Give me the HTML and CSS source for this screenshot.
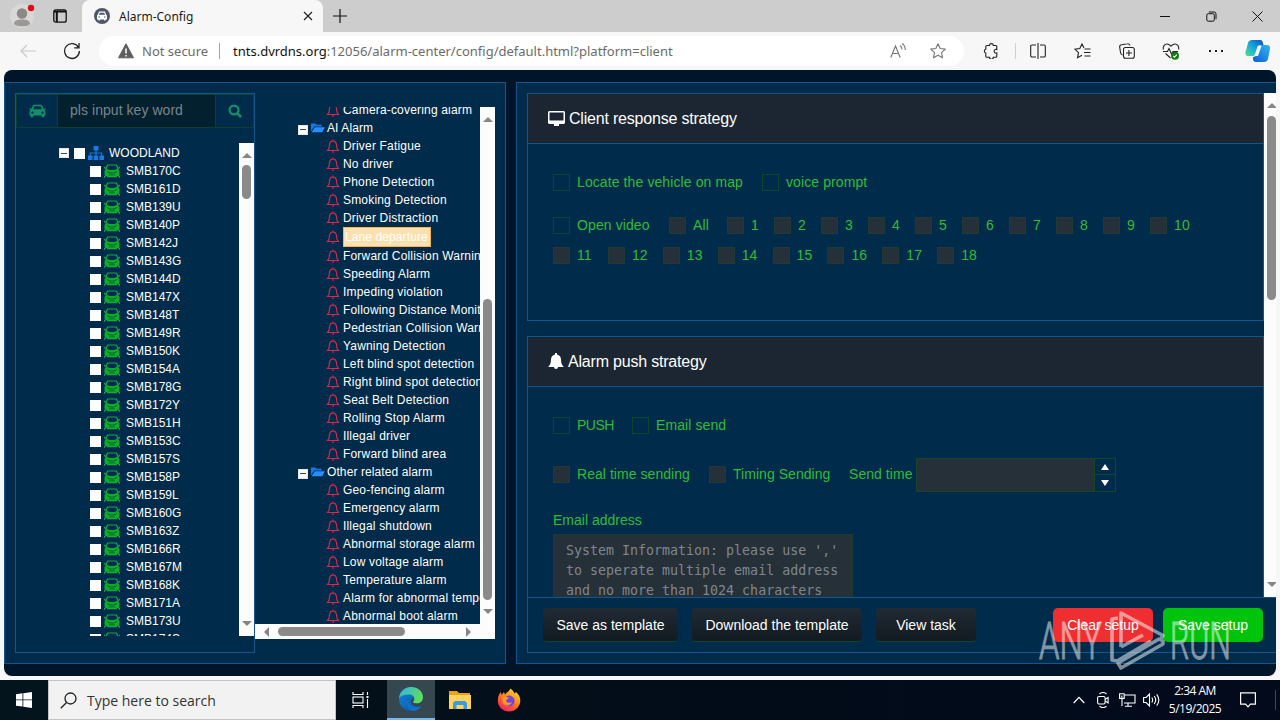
FILE: index.html
```html
<!DOCTYPE html>
<html lang="en">
<head>
    <meta charset="UTF-8">
    <meta name="viewport" content="width=device-width, initial-scale=1.0">
    <title>Alarm-Config</title>
    <link rel="stylesheet" href="styles.css">
</head>
<body>
    <svg class="sprite" width="0" height="0">
        <symbol id="car" viewBox="0 0 16 14">
            <path fill-rule="evenodd" d="M3.6 0.8h8.8l1.6 4 2-.6v1.4l-1.2.5c.8.7 1.2 1.4 1.2 2.5v2.8h-1.2v1.8h-2.6v-1.8H3.8v1.8H1.2v-1.8H0V8.600c0-1.100.4-1.800 1.200-2.500L0 5.600V4.200l2 .6zM4.700 2.300l-1 2.900h8.600l-1-2.900zM2.900 7.400a1.200 1.200 0 1 0 .1 0zM13 7.400a1.200 1.200 0 1 0 .1 0z"/>
        </symbol>
        <symbol id="car-row" viewBox="0 0 16 14">
            <path d="M3.500 1h9M2 5l1.500-4M14 5l-1.500-4M0 3l2 2M16 3l-2 2" fill="none" stroke="#12a84a" stroke-width="1.200"/>
            <path d="M2.500 4.500l3 1.500h5l3-1.500 2 2.500v3.500l-2 1.500h-11L.5 10.500V7z" fill="#09ad26"/>
            <path d="M3 7.500l3 1.500h4l3-1.500M5 11h6" fill="none" stroke="#045c2f"/>
            <path d="M0 13.500l2.500-3M16 13.500l-2.500-3M3 12.500h10" fill="none" stroke="#0fae3a" stroke-width="1.300"/>
        </symbol>
        <symbol id="bell-o" viewBox="0 0 14 14">
            <path d="M1.500 11.500h11L11 9.300 10.400 5C10 3 9 2 7 2S4 3 3.600 5L3 9.300zM7 .5v1.400M5.800 13h2.400" fill="none" stroke="#e0284f" stroke-width="1.100"/>
        </symbol>
        <symbol id="folder" viewBox="0 0 14 10">
            <path d="M0 8.500V.5h4.500l1 1.200h5.200v1.800H3.300z" fill="#1678e8"/>
            <path d="M3.800 4.200H14l-2.800 5H.6z" fill="#2b8cff"/>
        </symbol>
        <symbol id="search" viewBox="0 0 14 14">
            <circle cx="6" cy="6" r="4.400" fill="none" stroke="currentColor" stroke-width="2.200"/>
            <path d="M9.300 9.300l3.700 3.700" stroke="currentColor" stroke-width="2.600"/>
        </symbol>
    </svg>

    <div class="tabbar">
        <svg class="avatar" width="28" height="24" viewBox="0 0 28 24">
            <circle cx="12" cy="12" r="12" fill="#d9d8d7"/>
            <circle cx="12" cy="9.500" r="5.200" fill="#8b8886"/>
            <path d="M4 20c0-3.500 3.500-4.500 8-4.500s8 1 8 4.500c-2 2-5 2.300-8 2.300S6 22 4 20z" fill="#9b9896"/>
            <circle cx="21" cy="4" r="3.200" fill="#e00b1c"/>
        </svg>
        <svg class="tabs-icon" width="14" height="14" viewBox="0 0 14 14">
            <rect x=".8" y=".8" width="12.400" height="12.400" rx="2" fill="none" stroke="#111" stroke-width="1.300"/>
            <path d="M1 2.500h12M3.800 3v10" stroke="#111" stroke-width="2"/>
        </svg>
        <div class="tab">
            <svg width="16" height="16" viewBox="0 0 16 16">
                <circle cx="8" cy="8" r="8" fill="#4d5769"/>
                <path fill="#fff" fill-rule="evenodd" d="M5 3.500h6l1.200 3.200.8.800v4h-1.500v1h-1.500v-1H6v1H4.500v-1H3v-4l.8-.8zM5.700 4.700L5 6.800h6l-.7-2.100zM4.500 8.500v1h1.500v-1zM10 8.500v1h1.500v-1z"/>
            </svg>
            <span>Alarm-Config</span>
            <svg width="10" height="10" viewBox="0 0 10 10"><path d="M1 1l8 8M9 1l-8 8" stroke="#222" stroke-width="1.200"/></svg>
        </div>
        <svg class="new-tab" width="14" height="14" viewBox="0 0 14 14"><path d="M7 0v14M0 7h14" stroke="#111" stroke-width="1.200"/></svg>
        <div class="win-buttons">
            <span><svg width="10" height="10"><path d="M0 5.500h10" stroke="#111"/></svg></span>
            <span><svg width="11" height="11" viewBox="0 0 11 11" fill="none" stroke="#111"><rect x=".8" y="2.700" width="7.500" height="7.500" rx="1.500"/><path d="M2.800 1h5.200a2 2 0 0 1 2 2v5.200"/></svg></span>
            <span><svg width="11" height="11"><path d="M.5.500l10 10M10.500.500l-10 10" stroke="#111"/></svg></span>
        </div>
    </div>

    <div class="toolbar">
        <svg class="back" width="16" height="14" viewBox="0 0 16 14" fill="none" stroke="#c9c9c9" stroke-width="1.200"><path d="M16 7H1M7 1L1 7l6 6"/></svg>
        <svg class="reload" width="18" height="18" viewBox="0 0 18 18" fill="none" stroke="#222" stroke-width="1.300"><path d="M15.500 5.500A7.400 7.400 0 1 0 16.400 9M16 1v4.800h-4.800"/></svg>
        <div class="omnibox">
            <svg width="16" height="16" viewBox="0 0 16 16"><path d="M8 .8l7.500 14H.5z" fill="#5e5e5e" stroke="#5e5e5e" stroke-linejoin="round"/><path d="M8 5.500v5M8 12v1.500" stroke="#fff" stroke-width="1.500"/></svg>
            <span class="not-secure">Not secure</span>
            <span class="url"><b>tnts.dvrdns.org</b>:12056/alarm-center/config/default.html?platform=client</span>
            <svg class="read" width="17" height="16" viewBox="0 0 17 16" fill="none" stroke="#777" stroke-width="1.100"><path d="M.8 14.500L5.500 3l4.700 11.500M2.500 10.500h6M10 2.500c1.500 1 2 2 2 4M12 .5c2.300 1.500 3.300 3.500 3.300 6.500"/></svg>
            <svg class="star" width="16" height="16" viewBox="0 0 16 16" fill="none" stroke="#777" stroke-width="1.100"><path d="M8 .8l2.200 4.700 5.100.6-3.800 3.500 1 5.100L8 12.200l-4.500 2.500 1-5.100L.7 6.100l5.100-.6z" stroke-linejoin="round"/></svg>
        </div>
        <div class="tools">
            <span class="ext"><svg width="16" height="16" viewBox="0 0 16 16"><path d="M3.800 2.500h2.700a1.900 1.900 0 0 1 3.800 0h2.500a1 1 0 0 1 1 1v3a1.900 1.900 0 1 0 0 3.500v3.300a1 1 0 0 1-1 1h-2.500a1.900 1.900 0 0 1-3.800 0H3.800a1 1 0 0 1-1-1v-3.300a1.900 1.900 0 0 1 0-3.700V3.500a1 1 0 0 1 1-1z"/></svg></span>
            <span><svg width="16" height="16" viewBox="0 0 16 16"><path d="M6 2H2a1.300 1.300 0 0 0-1.300 1.300v9.400A1.300 1.300 0 0 0 2 14h4M10 2h4a1.300 1.300 0 0 1 1.300 1.300v9.400A1.300 1.300 0 0 1 14 14h-4M8 0v16"/></svg></span>
            <span><svg width="17" height="16" viewBox="0 0 17 16"><path d="M10 5L8 1 5.800 5.500.8 6.100l3.700 3.500-1 5.100L8 12.200M10.500 6h6M10 9.500h6.500M10.500 13h6"/></svg></span>
            <span><svg width="16" height="16" viewBox="0 0 16 16"><path d="M3.500 12A3 3 0 0 1 1.500 9.500L.7 4a2 2 0 0 1 1.800-2.300l6-.9a2 2 0 0 1 2.400 1.700"/><rect x="4.500" y="4.500" width="10.800" height="10.800" rx="2"/><path d="M9.900 7v6M7 10h6"/></svg></span>
            <span><svg width="18" height="17" viewBox="0 0 18 17"><path d="M1.300 6.500C.8 3.500 2.500 1 5 1c2 0 3 1.200 4 2.200C10 2.200 11 1 13 1c2.500 0 4.200 2.500 3.700 5.500M1 8.500h4.500l1.500-3 2.500 5.500 1.500-2.500h5M3.500 10.500l5 4.500"/><circle cx="13" cy="12.800" r="4" fill="#107c10" stroke="none"/><path d="M11.300 13l1.300 1.200 2.200-2.500" stroke="#fff"/></svg></span>
            <span><svg width="16" height="4" viewBox="0 0 16 4"><path d="M1 1h2v2H1zM7 1h2v2H7zM13 1h2v2h-2z" fill="#222" stroke="none"/></svg></span>
            <span class="copilot"><svg width="26" height="24" viewBox="0 0 26 24">
                <defs>
                    <linearGradient id="cp1" x1="0" y1="1" x2="1" y2="0"><stop offset="0" stop-color="#4fe08e"/><stop offset=".5" stop-color="#18a7dd"/><stop offset="1" stop-color="#0a4fc0"/></linearGradient>
                    <linearGradient id="cp2" x1="0" y1="1" x2="1" y2="0"><stop offset="0" stop-color="#0a5fd8"/><stop offset="1" stop-color="#35b5ee"/></linearGradient>
                </defs>
                <path d="M7 1h8c2 0 2.500 1 3 3l.5 2h-3c-2 0-3 1-3.500 3l-2 6c-.5 1.500-1.500 2-3 2H3c-2.500 0-3-2-2.500-4L3 4c.6-2 2-3 4-3z" fill="url(#cp1)" stroke="none"/>
                <path d="M19 23h-8c-2 0-3-1-3-3v-2c2 0 3-1 3.500-3l2-6C14 7.500 15 6 17 6h5c2.500 0 3.500 2 3 4l-2 10c-.5 2-2 3-4 3z" fill="url(#cp2)" stroke="none"/>
                <path d="M13.500 7h3l-3.500 10h-3z" fill="#f4fbff" stroke="none"/>
            </svg></span>
        </div>
    </div>

    <div class="viewport">
        <div class="panel left">
            <div class="vehicles">
                <div class="search-row">
                    <span class="cell"><svg width="17" height="14"><use href="#car"/></svg></span>
                    <span class="field">pls input key word</span>
                    <span class="cell end"><svg width="14" height="14"><use href="#search"/></svg></span>
                </div>
                <div class="scroll-area">
                    <ul class="tree" id="vehicleTree">
                        <li class="root">
                            <i class="toggle"></i><i class="box"></i>
                            <svg width="16" height="14" viewBox="0 0 16 14"><path d="M5.500 0h5v4.500h-5zM0 9.500h4.600V14H0zM5.700 9.500h4.600V14H5.700zM11.400 9.500H16V14h-4.600z" fill="#1b78e0"/><path d="M8 4v6M2.300 10V7h11.400v3" fill="none" stroke="#1b78e0" stroke-width="1.200"/></svg>
                            <span>WOODLAND</span>
                        </li>
                    </ul>
                    <div class="vbar"><i class="up"></i><i class="thumb"></i><i class="down"></i></div>
                </div>
            </div>
            <div class="alarms">
                <div class="alarm-scroll">
                    <ul class="tree" id="alarmTree"></ul>
                    <div class="vbar"><i class="up"></i><i class="thumb"></i><i class="down"></i></div>
                </div>
                <div class="hbar"><i class="prev"></i><i class="thumb"></i><i class="next"></i></div>
            </div>
        </div>

        <div class="panel right">
            <div class="settings">
                <div class="cards">
                    <section class="card response">
                        <h3><svg width="17" height="16" viewBox="0 0 17 16"><path fill="#fff" fill-rule="evenodd" d="M1 0h15l1 1v11l-1 1h-5v2H6v-2H1l-1-1V1zM1.500 1.500v8h14v-8z"/></svg>Client response strategy</h3>
                        <div class="row"><label class="locate"><i class="check"></i>Locate the vehicle on map</label><label><i class="check"></i>voice prompt</label></div>
                        <div class="row video" id="channels"><label class="open"><i class="check"></i>Open video</label><label class="all"><i class="check off"></i>All</label></div>
                        <div class="row video second" id="channels2"></div>
                    </section>
                    <section class="card push">
                        <h3><svg width="16" height="17" viewBox="0 0 16 17"><path fill="#fff" d="M7 0h2v1.500c2.500.5 4 2.500 4 5 0 4 1 5.500 2.800 7.500H10a2 2 0 0 1-4 0H.2C2 12 3 10.500 3 6.500c0-2.500 1.500-4.500 4-5z"/></svg>Alarm push strategy</h3>
                        <div class="row"><label class="push-opt"><i class="check"></i>PUSH</label><label><i class="check"></i>Email send</label></div>
                        <div class="row timing">
                            <label class="real"><i class="check off"></i>Real time sending</label>
                            <label class="timed"><i class="check off"></i>Timing Sending</label>
                            <span class="send-time">Send time</span>
                            <div class="spinner"><span class="value"></span><span class="steps"><i class="inc"></i><i class="dec"></i></span></div>
                        </div>
                        <div class="email-label">Email address</div>
                        <div class="textarea">System Information: please use ','<br>to seperate multiple email address<br>and no more than 1024 characters</div>
                    </section>
                </div>
                <div class="vbar"><i class="up"></i><i class="thumb"></i><i class="down"></i></div>
            </div>
            <div class="footer">
                <span class="btn save-as">Save as template</span>
                <span class="btn download">Download the template</span>
                <span class="btn view">View task</span>
                <span class="btn clear">Clear setup</span>
                <span class="btn save">Save setup</span>
            </div>
        </div>
    </div>

    <div class="taskbar">
        <span class="start"><svg width="16" height="16" viewBox="0 0 16 16"><path d="M0 2.200l6.500-.9v6.200H0zM7.300 1.200L16 0v7.500H7.300zM0 8.300h6.500v6.300L0 13.700zM7.300 8.300H16V16l-8.700-1.200z" fill="#fff"/></svg></span>
        <div class="search-box">
            <svg width="17" height="17" viewBox="0 0 17 17" fill="none" stroke="#222" stroke-width="1.300"><circle cx="10.500" cy="6.500" r="5.500"/><path d="M6.500 10.500L.8 16.200"/></svg>
            <span>Type here to search</span>
        </div>
        <span class="app taskview"><svg width="17" height="16" viewBox="0 0 17 16" fill="none" stroke="#fff" stroke-width="1.100"><path d="M1 0v2.500h10V0M1 16v-2.500h10V16M15.500 0v3M15.500 7v9"/><rect x="1" y="5" width="10" height="6"/><path d="M14.500 4h2v2h-2z" fill="#fff" stroke="none"/></svg></span>
        <span class="app active"><svg width="24" height="24" viewBox="0 0 24 24">
            <defs>
                <linearGradient id="ed1" x1="0" y1="0" x2="1" y2=".4"><stop offset="0" stop-color="#2cb4ed"/><stop offset="1" stop-color="#5fdc5a"/></linearGradient>
                <linearGradient id="ed2" x1="0" y1="0" x2="1" y2="1"><stop offset="0" stop-color="#1287d8"/><stop offset="1" stop-color="#0c4f9e"/></linearGradient>
            </defs>
            <circle cx="12" cy="12" r="12" fill="url(#ed2)"/>
            <path d="M0 11C1 4 6 0 12 0c7 0 12 4.500 12 10.500 0 4-3 6-6.500 6-3 0-4.500-1-3-2.500 2-2.500.5-6.500-4-6.500C6 7.500 2 8.500 0 11z" fill="url(#ed1)"/>
            <path d="M8 12c-2 5 1 11 6 12 3 0 7-2 8.500-5C17 21.500 9 19 8 12z" fill="#1670c8"/>
            <path d="M14.500 14c-1.500 1.500 0 2.500 3 2.500 3.500 0 6-2 6.500-5 .3 3-.3 5.500-1.500 7.500-5 2-11-.5-10.500-5 .2-2 1.500-3 2.500-3 .8 1 .8 2.200 0 3z" fill="#37474f"/>
        </svg></span>
        <span class="app"><svg width="22" height="18" viewBox="0 0 22 18"><path d="M0 0h8l2 2h11v4H0z" fill="#e8a317"/><path d="M0 4h22v14H0z" fill="#ffd35c"/><path d="M4 18v-6l2-2h10l2 2v6h-3.500v-4h-7v4z" fill="#3b9be0"/></svg></span>
        <span class="app"><svg width="24" height="24" viewBox="0 0 24 24">
            <defs><linearGradient id="fx" x1=".8" y1="0" x2=".2" y2="1"><stop offset="0" stop-color="#ffe226"/><stop offset=".5" stop-color="#ff7a1b"/><stop offset="1" stop-color="#f5156c"/></linearGradient></defs>
            <path d="M12 23.500C5.500 23.500.800 18.500.800 12.500c0-3.500 1.200-6.500 3-8.500l.7 3L7 4l1 2.500C10 4 12.500 3 13.500.5c2 1.500 3 3 4 5L19 4c3 2.500 4.300 5.500 4.300 8.500 0 6-4.800 11-11.300 11z" fill="url(#fx)"/>
            <circle cx="12.200" cy="13" r="5.400" fill="#7543e5"/>
            <path d="M5 9c3-1 5 0 7 1-1 1.500-3 1-3 3 1 2 4 2.500 6 1-1 4-7 5-9 1z" fill="#ff9a1f"/>
        </svg></span>
        <div class="tray">
            <span><svg width="12" height="8"><path d="M.7 7L6 1.300 11.300 7" fill="none" stroke="#fff" stroke-width="1.200"/></svg></span>
            <span><svg width="12" height="16" viewBox="0 0 12 16" fill="none" stroke="#fff" stroke-width="1.100"><rect x=".6" y="4.500" width="7.500" height="7.500" rx="1.500"/><path d="M8.100 7.500l3-2v5.500l-3-2M2.500 2C4.500.3 7.500.3 9.500 2M2.500 14.200c2 1.600 5 1.600 7 0"/></svg></span>
            <span><svg width="17" height="14" viewBox="0 0 17 14" fill="none" stroke="#fff" stroke-width="1.100"><path d="M5.500 2H16v8H5M9 10v3M6 13.200h7M3 6v7"/><path d="M.6.800h4.600v4.600H.6zM2.800 2.500v2"/></svg></span>
            <span><svg width="17" height="14" viewBox="0 0 17 14" fill="none" stroke="#fff" stroke-width="1.100"><path d="M.6 4.500h2.500L6.500 1v12L3.100 9.500H.6zM8.800 4.500c1 1.500 1 3.500 0 5M11.200 3c1.900 2.500 1.900 5.500 0 8M13.700 1.300c2.600 3.500 2.600 8 0 11.400"/></svg></span>
            <div class="clock">2:34 AM<br>5/19/2025</div>
            <span class="notes"><svg width="16" height="16" viewBox="0 0 16 16" fill="none" stroke="#fff" stroke-width="1.200"><path d="M.6.800h14.800v11.400h-5L8 14.800l-2.400-2.600h-5z"/></svg></span>
        </div>
    </div>

    <svg class="watermark" width="196" height="64" viewBox="0 0 196 64">
        <text x="1" y="50" textLength="63" lengthAdjust="spacingAndGlyphs">ANY</text>
        <g fill="none" stroke="#fff" stroke-width="3.600" stroke-linejoin="round">
            <path d="M83 38V4l42 22.500-2 3"/>
            <path d="M80 9l-6 1v41l5 1 34-20"/>
            <path d="M83 38l22-12M83 59l42-24v-3l-4-2-41 24z"/>
        </g>
        <text x="132" y="50" textLength="61" lengthAdjust="spacingAndGlyphs">RUN</text>
    </svg>

    <script>
        const vehicles = ['SMB170C', 'SMB161D', 'SMB139U', 'SMB140P', 'SMB142J', 'SMB143G', 'SMB144D', 'SMB147X',
            'SMB148T', 'SMB149R', 'SMB150K', 'SMB154A', 'SMB178G', 'SMB172Y', 'SMB151H', 'SMB153C', 'SMB157S',
            'SMB158P', 'SMB159L', 'SMB160G', 'SMB163Z', 'SMB166R', 'SMB167M', 'SMB168K', 'SMB171A', 'SMB173U', 'SMB174S'];

        const vehicleTree = document.getElementById('vehicleTree');
        vehicles.forEach(name => {
            vehicleTree.insertAdjacentHTML('beforeend',
                `<li><i class="box"></i><svg width="16" height="14"><use href="#car-row"/></svg><span>${name}</span></li>`);
        });

        const groups = [
            { items: ['Camera-covering alarm'] },
            { name: 'AI Alarm', items: ['Driver Fatigue', 'No driver', 'Phone Detection', 'Smoking Detection',
                'Driver Distraction', 'Lane departure', 'Forward Collision Warning', 'Speeding Alarm', 'Impeding violation',
                'Following Distance Monitoring', 'Pedestrian Collision Warning', 'Yawning Detection',
                'Left blind spot detection', 'Right blind spot detection', 'Seat Belt Detection', 'Rolling Stop Alarm',
                'Illegal driver', 'Forward blind area'] },
            { name: 'Other related alarm', items: ['Geo-fencing alarm', 'Emergency alarm', 'Illegal shutdown',
                'Abnormal storage alarm', 'Low voltage alarm', 'Temperature alarm', 'Alarm for abnormal temperature',
                'Abnormal boot alarm'] }
        ];

        const alarmTree = document.getElementById('alarmTree');
        groups.forEach(group => {
            if (group.name) {
                alarmTree.insertAdjacentHTML('beforeend',
                    `<li class="group"><i class="toggle"></i><svg width="14" height="10"><use href="#folder"/></svg><span>${group.name}</span></li>`);
            }
            group.items.forEach(item => {
                const cls = item === 'Lane departure' ? ' class="selected"' : '';
                alarmTree.insertAdjacentHTML('beforeend',
                    `<li${cls}><svg width="14" height="14"><use href="#bell-o"/></svg><span>${item}</span></li>`);
            });
        });

        // video channels
        for (let i = 1; i <= 18; i++) {
            document.getElementById(i <= 10 ? 'channels' : 'channels2').insertAdjacentHTML('beforeend',
                `<label class="ch"><i class="check off"></i>${i}</label>`);
        }
    </script>
</body>
</html>
```
FILE: styles.css
```css
* {
    margin: 0;
    padding: 0;
    box-sizing: border-box;
}

body {
    width: 1280px;
    height: 720px;
    overflow: hidden;
    background: #f7f7f7;
    font-family: "Liberation Sans", Arial, sans-serif;
    position: relative;
}

svg {
    display: block;
    flex: none;
}

.sprite {
    position: absolute;
}

/* browser chrome */
.tabbar {
    height: 32px;
    background: #cdcdcd;
    display: flex;
    align-items: center;
    font: 12px "Noto Sans", sans-serif;
    color: #1b1b1b;
}

.avatar {
    margin-left: 10px;
}

.tabs-icon {
    margin-left: 15px;
}

.tab {
    width: 241px;
    height: 32px;
    margin-left: 15px;
    padding: 0 10px 0 12px;
    background: #f7f7f7;
    border-radius: 8px 8px 0 0;
    display: flex;
    align-items: center;
}

.tab span {
    flex: 1;
    margin-left: 9px;
}

.new-tab {
    margin-left: 10px;
}

.win-buttons {
    display: flex;
    margin-left: auto;
}

.win-buttons span {
    width: 46px;
    display: flex;
    justify-content: center;
}

.toolbar {
    height: 38px;
    display: flex;
    align-items: center;
}

.back {
    margin-left: 20px;
}

.reload {
    margin-left: 27px;
}

.omnibox {
    width: 865px;
    height: 30px;
    margin-left: 18px;
    padding-left: 19px;
    background: #fff;
    border-radius: 15px;
    display: flex;
    align-items: center;
    font: 13px "Noto Sans", sans-serif;
    color: #6b6b6b;
    flex: none;
}

.not-secure {
    width: 78px;
    height: 16px;
    margin-left: 8px;
    line-height: 16px;
    border-right: 1px solid #a5a5a5;
}

.url {
    margin-left: 13px;
}

.url b {
    font-weight: normal;
    color: #111;
}

.read {
    margin-left: auto;
}

.star {
    margin: 0 18px 0 23px;
}

.tools {
    display: flex;
    margin-left: 3px;
}

.tools span {
    width: 44.4px;
    height: 16px;
    display: flex;
    align-items: center;
    justify-content: center;
    flex: none;
}

.tools svg {
    fill: none;
    stroke: #222;
    stroke-width: 1.1;
}

.tools .ext {
    width: 49px;
    border-right: 1px solid #d0d0d0;
}

.tools .copilot {
    width: 40px;
}

/* page */
.viewport {
    width: 1272px;
    height: 606px;
    margin-left: 4px;
    padding-top: 12px;
    background: #001529;
    border-radius: 8px;
    overflow: hidden;
    display: flex;
    gap: 10px;
}

.panel {
    height: 582px;
    background: #002b4b;
    border: 1px solid #13568d;
}

.left {
    width: 502px;
    padding: 10px;
    display: flex;
}

.vehicles {
    width: 240px;
    height: 560px;
    border: 1px solid #13568d;
}

.search-row {
    height: 34px;
    display: flex;
    border: 1px solid #0d402e;
}

.cell {
    width: 40px;
    display: flex;
    align-items: center;
    justify-content: center;
    color: #109068;
    fill: #109068;
}

.cell.end {
    width: 37px;
}

.field {
    flex: 1;
    padding-left: 12px;
    background: #03202f;
    border: solid #0d402e;
    border-width: 0 1px;
    color: #7b858c;
    font-size: 14px;
    letter-spacing: 0.05px;
    line-height: 31px;
}

.scroll-area {
    height: 493px;
    margin-top: 15px;
    display: flex;
    overflow: hidden;
}

.tree {
    flex: 1;
    overflow: hidden;
    list-style: none;
    font-size: 12px;
    color: #fff;
    white-space: nowrap;
}

.tree li {
    height: 18px;
    display: flex;
    align-items: center;
}

#vehicleTree {
    padding-top: 1px;
}

#vehicleTree li {
    padding-left: 74px;
}

#vehicleTree .root {
    padding-left: 43px;
}

#vehicleTree svg {
    margin: 0 6px 0 3px;
}

#vehicleTree .root svg {
    margin-right: 5px;
}

.box {
    width: 11px;
    height: 11px;
    background: #fff;
    flex: none;
}

.toggle {
    width: 10px;
    height: 10px;
    background: linear-gradient(#444, #444) center / 6px 1px no-repeat #fff;
    border: 1px solid #e6e6e6;
    flex: none;
}

.root .toggle {
    margin-right: 5px;
}

.alarms {
    width: 240px;
    margin-top: 14px;
}

.alarm-scroll {
    height: 517px;
    display: flex;
    overflow: hidden;
}

#alarmTree li {
    padding-left: 71px;
    letter-spacing: 0.18px;
}

#alarmTree li:first-child {
    margin-top: -6px;
}

#alarmTree .group {
    padding-left: 43px;
    letter-spacing: 0.1px;
}

#alarmTree span {
    margin-left: 3px;
}

#alarmTree .group span {
    margin-left: 2px;
}

.group .toggle {
    margin: 3px 3px 0 0;
}

#alarmTree li.selected {
    height: 20px;
    letter-spacing: 0.1px;
}

.selected span {
    height: 20px;
    line-height: 19px;
    padding: 0 2px 0 1px;
    background: #ffe0ae;
    border: 1px solid #f7b54d;
}

/* scrollbars */
.vbar {
    width: 15px;
    background: #fcfcfc;
    display: flex;
    flex-direction: column;
    align-items: center;
    flex: none;
}

.vbar .thumb,
.hbar .thumb {
    background: #8a8a8a;
    border-radius: 5px;
}

.vbar .thumb {
    width: 9px;
    height: 34px;
    margin-top: 7px;
}

.up,
.down {
    border: 5px solid transparent;
}

.up {
    margin-top: 10px;
    border-top: 0;
    border-bottom-color: #858585;
}

.down {
    margin: auto 0 10px;
    border-bottom: 0;
    border-top-color: #858585;
}

.alarms .vbar .thumb {
    height: 301px;
    margin-top: 177px;
}

.hbar {
    height: 15px;
    background: #fcfcfc;
    display: flex;
    align-items: center;
}

.hbar .thumb {
    width: 127px;
    height: 9px;
    margin-left: 9px;
}

.prev,
.next {
    border: 5px solid transparent;
}

.prev {
    margin-left: 9px;
    border-left: 0;
    border-right-color: #858585;
}

.next {
    margin-left: 61px;
    border-right: 0;
    border-left-color: #858585;
}

/* right side */
.right {
    width: 780px;
    flex: none;
    padding: 10px 0 0 10px;
}

.settings {
    height: 504px;
    display: flex;
    overflow: hidden;
}

.cards {
    width: 737px;
}

.settings .vbar .thumb {
    height: 184px;
    margin-top: 8px;
}

.card {
    border: 1px solid #13568d;
    color: #2fbd36;
    font-size: 14px;
}

.response {
    height: 228px;
    margin-bottom: 15px;
}

.push {
    height: 300px;
}

.card h3 {
    height: 50px;
    padding-left: 20px;
    display: flex;
    align-items: center;
    gap: 4px;
    background: #1b2632;
    border-bottom: 1px solid #13568d;
    color: #fff;
    font-size: 16px;
    font-weight: normal;
    letter-spacing: -0.2px;
}

.row {
    display: flex;
    height: 18px;
    margin: 29px 0 0 25px;
    align-items: center;
    letter-spacing: 0.1px;
    white-space: nowrap;
}

.row label {
    display: flex;
    align-items: center;
    flex: none;
}

.check {
    width: 17px;
    height: 17px;
    margin-right: 7px;
    border: 1px solid #0c462d;
}

.check.off {
    background: #263039;
    border-color: #203a34;
}

.locate {
    width: 209px;
}

.video {
    margin-top: 25px;
}

.row.second {
    margin-top: 12px;
}

.open {
    width: 116px;
}

.all {
    width: 58px;
}

.ch {
    width: 47px;
}

.second .ch {
    width: 54.9px;
}

.push-opt {
    width: 79px;
    letter-spacing: -0.5px;
}

.timing {
    height: 34px;
    margin-top: 24px;
    letter-spacing: 0.05px;
}

.timing label,
.send-time {
    margin-bottom: 2px;
}

.real {
    width: 156px;
}

.timed {
    width: 140px;
}

.send-time {
    width: 67px;
}

.spinner {
    width: 200px;
    height: 34px;
    display: flex;
    border: 1px solid #174527;
}

.value {
    flex: 1;
    background: #263039;
    border-right: 1px solid #174527;
}

.steps {
    width: 20px;
    display: flex;
    flex-direction: column;
}

.steps i {
    height: 16px;
    display: flex;
    align-items: center;
    justify-content: center;
}

.steps i::before {
    content: "";
    border: 4px solid transparent;
}

.steps .inc {
    border-bottom: 1px solid #174527;
}

.steps .inc::before {
    border-top-width: 0;
    border-bottom: 6px solid #fff;
}

.steps .dec::before {
    border-bottom-width: 0;
    border-top: 6px solid #fff;
}

.email-label {
    margin: 20px 0 0 25px;
    line-height: 16px;
}

.textarea {
    width: 300px;
    height: 90px;
    margin: 6px 0 0 25px;
    padding: 6px 12px;
    background: #263039;
    border: 1px solid #1c3c2c;
    color: #7f868d;
    font: 13.3px/20px "DejaVu Sans Mono", monospace;
    white-space: nowrap;
}

.footer {
    height: 56px;
    padding: 0 0 0 15px;
    border: 1px solid #13568d;
    display: flex;
    align-items: center;
}

.btn {
    height: 34px;
    line-height: 34px;
    border-radius: 4px;
    text-align: center;
    color: #fff;
    font-size: 14px;
    background: linear-gradient(#222b34, #111a20);
    border-bottom: 1px solid #0c4a2c;
}

.save-as {
    width: 135px;
}

.download {
    width: 170px;
    margin-left: 14px;
}

.view {
    width: 100px;
    margin-left: 14px;
}

.clear {
    width: 100px;
    margin-left: 77px;
    background: #ee2e31;
    border: 0;
    border-radius: 5px;
}

.save {
    width: 100px;
    margin-left: 10px;
    background: #00c30b;
    border: 0;
    border-radius: 5px;
}

/* taskbar */
.taskbar {
    height: 40px;
    margin-top: 4px;
    display: flex;
    background: linear-gradient(90deg, #04141c, #020c18 55%, #020a1c);
}

.start,
.app {
    width: 48px;
    display: flex;
    align-items: center;
    justify-content: center;
}

.search-box {
    width: 288px;
    padding-left: 11px;
    background: #f2f2f2;
    border: 1px solid #c4c4c4;
    display: flex;
    align-items: center;
    gap: 10px;
    font: 14px "Open Sans", sans-serif;
    color: #333;
}

.app {
    margin-right: 1px;
}

.taskview {
    margin-right: 3px;
}

.active {
    background: #37474f;
    border-bottom: 2px solid #76b9ed;
}

.tray {
    margin-left: auto;
    padding-right: 4px;
    display: flex;
    align-items: center;
    color: #fff;
}

.tray span {
    width: 24px;
    display: flex;
    justify-content: center;
}

.clock {
    width: 64px;
    text-align: center;
    font: 12px/18px "Open Sans", sans-serif;
    letter-spacing: -0.5px;
}

.tray .notes {
    width: 49px;
    height: 20px;
    align-items: center;
    padding-right: 7px;
    border-right: 1px solid #3f4854;
}

/* recorder logo, floats over everything */
.watermark {
    position: absolute;
    left: 1038px;
    top: 609px;
    opacity: 0.5;
}

.watermark text {
    font: 300 51px Roboto, sans-serif;
    fill: #fff;
    stroke: #fff;
    stroke-width: 1;
}
```
